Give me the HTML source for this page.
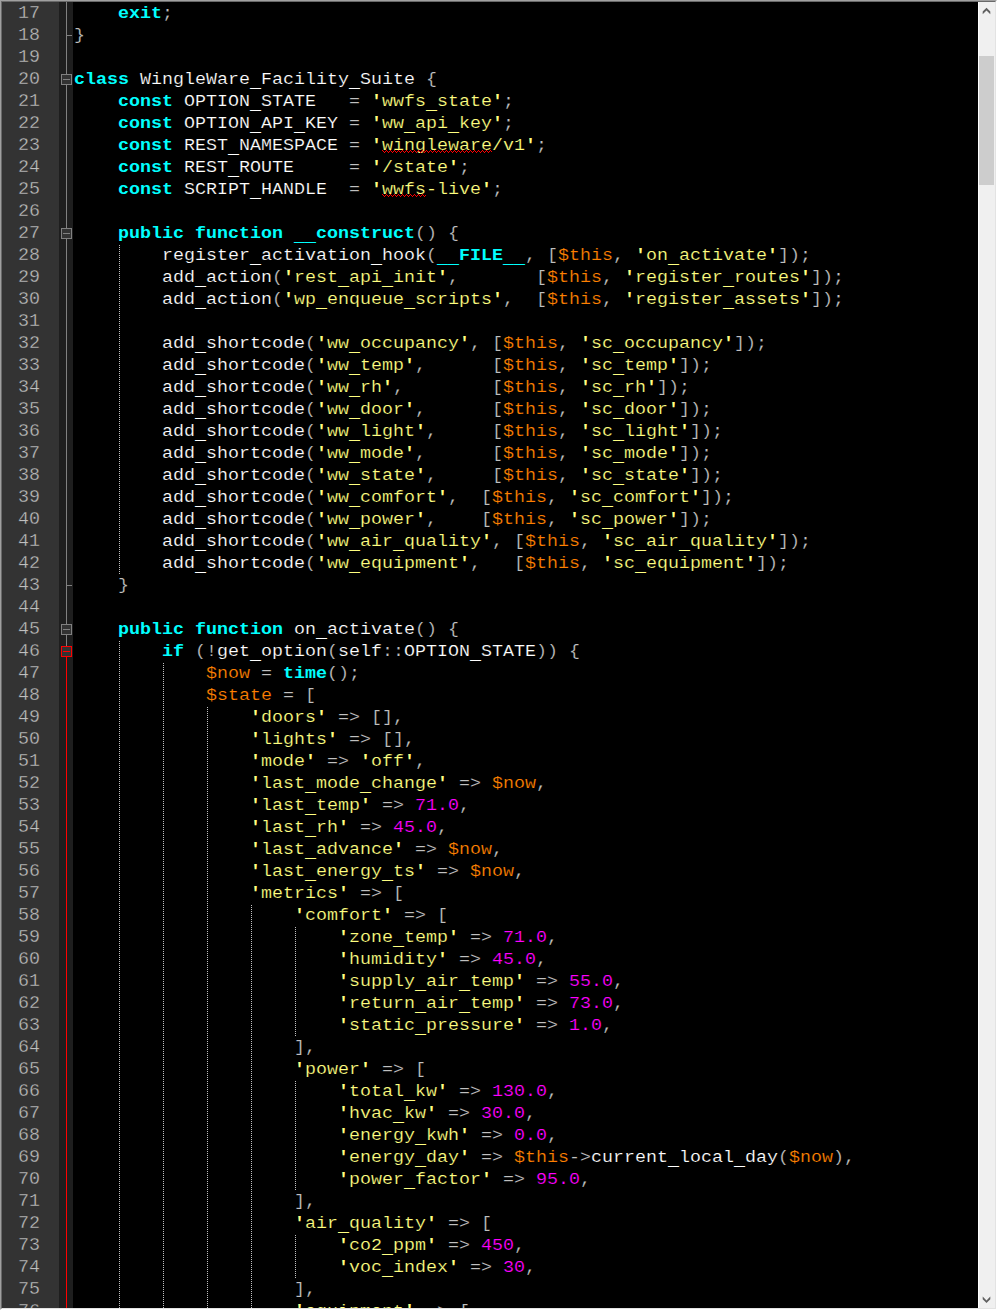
<!DOCTYPE html>
<html lang="en">
<head>
<meta charset="utf-8">
<title>WingleWare Facility Suite - editor</title>
<style>
html,body{margin:0;padding:0;background:#000;}
body{width:997px;height:1310px;overflow:hidden;position:relative;font-family:"Liberation Mono","DejaVu Sans Mono",monospace;font-size:18.333px;line-height:22px;color:#fff;}
#frame{position:absolute;left:0;top:0;width:997px;height:1310px;box-sizing:border-box;border-style:solid;border-width:1px;border-color:#a0a0a0 #fff #fff #a0a0a0;z-index:10;pointer-events:none;}
#frame:after{content:"";position:absolute;left:0;top:0;right:0;bottom:0;border-style:solid;border-width:1px;border-color:#696969 #e3e3e3 #e3e3e3 #696969;}
#num{position:absolute;left:2px;top:2px;width:57px;height:1306px;background:#333;color:#c0c0c0;overflow:hidden;}
#num div{height:22px;width:38px;text-align:right;white-space:pre;transform-origin:0 15px;transform:translateY(1px) scaleY(.96);-webkit-text-stroke:0.35px #333;}
#fold{position:absolute;left:59px;top:2px;width:14px;height:1306px;background:#1e1e1e;}
.fl{position:absolute;left:66px;width:1px;background:#808080;}
.fl.r,.tk.r{background:#ff0000;}
.tk{position:absolute;left:66px;width:6px;height:1px;background:#808080;}
.bx{position:absolute;left:61px;width:9px;height:9px;border:1px solid #808080;background:#333;}
.bx u{position:absolute;left:1px;top:4px;width:7px;height:1px;background:#808080;}
.bx.r{border-color:#ff0000;}
.bx.r u{background:#ff0000;}
#code{position:absolute;left:74px;top:2px;width:904px;height:1306px;overflow:hidden;}
.l{height:22px;white-space:pre;transform-origin:0 15px;transform:translateY(1px) scaleY(.86);-webkit-text-stroke:0.2px #000;}
b{color:#00ffff;font-weight:bold;-webkit-text-stroke:0;}
.u{position:relative;top:3.5px;-webkit-text-stroke:0;}
.s{color:#ffff80;}
.q{font-weight:bold;-webkit-text-stroke:0;}
.v{color:#ff8000;}
.n{color:#ff00ff;}
.o{color:#c0c0c0;}
.g{position:absolute;width:1px;background-image:linear-gradient(to bottom,#000 0,#000 1px,#c0c0c0 1px,#c0c0c0 2px);background-size:1px 2px;}
.sq{position:absolute;overflow:visible;}
#sb{position:absolute;left:978px;top:2px;width:17px;height:1306px;background:#f0f0f0;border-left:1px solid #fff;box-sizing:border-box;}
#thumb{position:absolute;left:0;top:54px;width:15px;height:129px;background:#cdcdcd;}
.ar{position:absolute;left:0;width:16px;height:17px;}
</style>
</head>
<body>
<svg width="0" height="0" style="position:absolute"><defs><pattern id="zz" width="4" height="3" patternUnits="userSpaceOnUse"><rect x="0" y="0" width="1" height="1" fill="#ff0000"/><rect x="1" y="1" width="1" height="1" fill="#ff0000"/><rect x="2" y="2" width="1" height="1" fill="#ff0000"/><rect x="3" y="1" width="1" height="1" fill="#ff0000"/></pattern></defs></svg>
<div id="num">
<div>17</div>
<div>18</div>
<div>19</div>
<div>20</div>
<div>21</div>
<div>22</div>
<div>23</div>
<div>24</div>
<div>25</div>
<div>26</div>
<div>27</div>
<div>28</div>
<div>29</div>
<div>30</div>
<div>31</div>
<div>32</div>
<div>33</div>
<div>34</div>
<div>35</div>
<div>36</div>
<div>37</div>
<div>38</div>
<div>39</div>
<div>40</div>
<div>41</div>
<div>42</div>
<div>43</div>
<div>44</div>
<div>45</div>
<div>46</div>
<div>47</div>
<div>48</div>
<div>49</div>
<div>50</div>
<div>51</div>
<div>52</div>
<div>53</div>
<div>54</div>
<div>55</div>
<div>56</div>
<div>57</div>
<div>58</div>
<div>59</div>
<div>60</div>
<div>61</div>
<div>62</div>
<div>63</div>
<div>64</div>
<div>65</div>
<div>66</div>
<div>67</div>
<div>68</div>
<div>69</div>
<div>70</div>
<div>71</div>
<div>72</div>
<div>73</div>
<div>74</div>
<div>75</div>
<div>76</div>
</div>
<div id="fold"></div>
<i class="fl" style="top:2px;height:644px"></i>
<i class="fl r" style="top:657px;height:651px"></i>
<i class="tk" style="top:35px"></i>
<i class="tk" style="top:585px"></i>
<i class="bx" style="top:74px"><u></u></i>
<i class="bx" style="top:228px"><u></u></i>
<i class="bx" style="top:624px"><u></u></i>
<i class="bx r" style="top:646px"><u></u></i>
<div id="code">
<div class="l">    <b>exit</b><span class="o">;</span></div>
<div class="l"><span class="o">}</span></div>
<div class="l"></div>
<div class="l"><b>class</b> WingleWare<span class="u">_</span>Facility<span class="u">_</span>Suite <span class="o">{</span></div>
<div class="l">    <b>const</b> OPTION<span class="u">_</span>STATE   <span class="o">=</span> <span class="s"><span class="q">'</span>wwfs<span class="u">_</span>state<span class="q">'</span></span><span class="o">;</span></div>
<div class="l">    <b>const</b> OPTION<span class="u">_</span>API<span class="u">_</span>KEY <span class="o">=</span> <span class="s"><span class="q">'</span>ww<span class="u">_</span>api<span class="u">_</span>key<span class="q">'</span></span><span class="o">;</span></div>
<div class="l">    <b>const</b> REST<span class="u">_</span>NAMESPACE <span class="o">=</span> <span class="s"><span class="q">'</span>wingleware/v1<span class="q">'</span></span><span class="o">;</span></div>
<div class="l">    <b>const</b> REST<span class="u">_</span>ROUTE     <span class="o">=</span> <span class="s"><span class="q">'</span>/state<span class="q">'</span></span><span class="o">;</span></div>
<div class="l">    <b>const</b> SCRIPT<span class="u">_</span>HANDLE  <span class="o">=</span> <span class="s"><span class="q">'</span>wwfs-live<span class="q">'</span></span><span class="o">;</span></div>
<div class="l"></div>
<div class="l">    <b>public</b> <b>function</b> <b><span class="u">_</span><span class="u">_</span>construct</b><span class="o">(</span><span class="o">)</span> <span class="o">{</span></div>
<div class="l">        register<span class="u">_</span>activation<span class="u">_</span>hook<span class="o">(</span><b><span class="u">_</span><span class="u">_</span>FILE<span class="u">_</span><span class="u">_</span></b><span class="o">,</span> <span class="o">[</span><span class="v">$this</span><span class="o">,</span> <span class="s"><span class="q">'</span>on<span class="u">_</span>activate<span class="q">'</span></span><span class="o">]</span><span class="o">)</span><span class="o">;</span></div>
<div class="l">        add<span class="u">_</span>action<span class="o">(</span><span class="s"><span class="q">'</span>rest<span class="u">_</span>api<span class="u">_</span>init<span class="q">'</span></span><span class="o">,</span>       <span class="o">[</span><span class="v">$this</span><span class="o">,</span> <span class="s"><span class="q">'</span>register<span class="u">_</span>routes<span class="q">'</span></span><span class="o">]</span><span class="o">)</span><span class="o">;</span></div>
<div class="l">        add<span class="u">_</span>action<span class="o">(</span><span class="s"><span class="q">'</span>wp<span class="u">_</span>enqueue<span class="u">_</span>scripts<span class="q">'</span></span><span class="o">,</span>  <span class="o">[</span><span class="v">$this</span><span class="o">,</span> <span class="s"><span class="q">'</span>register<span class="u">_</span>assets<span class="q">'</span></span><span class="o">]</span><span class="o">)</span><span class="o">;</span></div>
<div class="l"></div>
<div class="l">        add<span class="u">_</span>shortcode<span class="o">(</span><span class="s"><span class="q">'</span>ww<span class="u">_</span>occupancy<span class="q">'</span></span><span class="o">,</span> <span class="o">[</span><span class="v">$this</span><span class="o">,</span> <span class="s"><span class="q">'</span>sc<span class="u">_</span>occupancy<span class="q">'</span></span><span class="o">]</span><span class="o">)</span><span class="o">;</span></div>
<div class="l">        add<span class="u">_</span>shortcode<span class="o">(</span><span class="s"><span class="q">'</span>ww<span class="u">_</span>temp<span class="q">'</span></span><span class="o">,</span>      <span class="o">[</span><span class="v">$this</span><span class="o">,</span> <span class="s"><span class="q">'</span>sc<span class="u">_</span>temp<span class="q">'</span></span><span class="o">]</span><span class="o">)</span><span class="o">;</span></div>
<div class="l">        add<span class="u">_</span>shortcode<span class="o">(</span><span class="s"><span class="q">'</span>ww<span class="u">_</span>rh<span class="q">'</span></span><span class="o">,</span>        <span class="o">[</span><span class="v">$this</span><span class="o">,</span> <span class="s"><span class="q">'</span>sc<span class="u">_</span>rh<span class="q">'</span></span><span class="o">]</span><span class="o">)</span><span class="o">;</span></div>
<div class="l">        add<span class="u">_</span>shortcode<span class="o">(</span><span class="s"><span class="q">'</span>ww<span class="u">_</span>door<span class="q">'</span></span><span class="o">,</span>      <span class="o">[</span><span class="v">$this</span><span class="o">,</span> <span class="s"><span class="q">'</span>sc<span class="u">_</span>door<span class="q">'</span></span><span class="o">]</span><span class="o">)</span><span class="o">;</span></div>
<div class="l">        add<span class="u">_</span>shortcode<span class="o">(</span><span class="s"><span class="q">'</span>ww<span class="u">_</span>light<span class="q">'</span></span><span class="o">,</span>     <span class="o">[</span><span class="v">$this</span><span class="o">,</span> <span class="s"><span class="q">'</span>sc<span class="u">_</span>light<span class="q">'</span></span><span class="o">]</span><span class="o">)</span><span class="o">;</span></div>
<div class="l">        add<span class="u">_</span>shortcode<span class="o">(</span><span class="s"><span class="q">'</span>ww<span class="u">_</span>mode<span class="q">'</span></span><span class="o">,</span>      <span class="o">[</span><span class="v">$this</span><span class="o">,</span> <span class="s"><span class="q">'</span>sc<span class="u">_</span>mode<span class="q">'</span></span><span class="o">]</span><span class="o">)</span><span class="o">;</span></div>
<div class="l">        add<span class="u">_</span>shortcode<span class="o">(</span><span class="s"><span class="q">'</span>ww<span class="u">_</span>state<span class="q">'</span></span><span class="o">,</span>     <span class="o">[</span><span class="v">$this</span><span class="o">,</span> <span class="s"><span class="q">'</span>sc<span class="u">_</span>state<span class="q">'</span></span><span class="o">]</span><span class="o">)</span><span class="o">;</span></div>
<div class="l">        add<span class="u">_</span>shortcode<span class="o">(</span><span class="s"><span class="q">'</span>ww<span class="u">_</span>comfort<span class="q">'</span></span><span class="o">,</span>  <span class="o">[</span><span class="v">$this</span><span class="o">,</span> <span class="s"><span class="q">'</span>sc<span class="u">_</span>comfort<span class="q">'</span></span><span class="o">]</span><span class="o">)</span><span class="o">;</span></div>
<div class="l">        add<span class="u">_</span>shortcode<span class="o">(</span><span class="s"><span class="q">'</span>ww<span class="u">_</span>power<span class="q">'</span></span><span class="o">,</span>    <span class="o">[</span><span class="v">$this</span><span class="o">,</span> <span class="s"><span class="q">'</span>sc<span class="u">_</span>power<span class="q">'</span></span><span class="o">]</span><span class="o">)</span><span class="o">;</span></div>
<div class="l">        add<span class="u">_</span>shortcode<span class="o">(</span><span class="s"><span class="q">'</span>ww<span class="u">_</span>air<span class="u">_</span>quality<span class="q">'</span></span><span class="o">,</span> <span class="o">[</span><span class="v">$this</span><span class="o">,</span> <span class="s"><span class="q">'</span>sc<span class="u">_</span>air<span class="u">_</span>quality<span class="q">'</span></span><span class="o">]</span><span class="o">)</span><span class="o">;</span></div>
<div class="l">        add<span class="u">_</span>shortcode<span class="o">(</span><span class="s"><span class="q">'</span>ww<span class="u">_</span>equipment<span class="q">'</span></span><span class="o">,</span>   <span class="o">[</span><span class="v">$this</span><span class="o">,</span> <span class="s"><span class="q">'</span>sc<span class="u">_</span>equipment<span class="q">'</span></span><span class="o">]</span><span class="o">)</span><span class="o">;</span></div>
<div class="l">    <span class="o">}</span></div>
<div class="l"></div>
<div class="l">    <b>public</b> <b>function</b> on<span class="u">_</span>activate<span class="o">(</span><span class="o">)</span> <span class="o">{</span></div>
<div class="l">        <b>if</b> <span class="o">(</span><span class="o">!</span>get<span class="u">_</span>option<span class="o">(</span>self<span class="o">:</span><span class="o">:</span>OPTION<span class="u">_</span>STATE<span class="o">)</span><span class="o">)</span> <span class="o">{</span></div>
<div class="l">            <span class="v">$now</span> <span class="o">=</span> <b>time</b><span class="o">(</span><span class="o">)</span><span class="o">;</span></div>
<div class="l">            <span class="v">$state</span> <span class="o">=</span> <span class="o">[</span></div>
<div class="l">                <span class="s"><span class="q">'</span>doors<span class="q">'</span></span> <span class="o">=</span><span class="o">&gt;</span> <span class="o">[</span><span class="o">]</span><span class="o">,</span></div>
<div class="l">                <span class="s"><span class="q">'</span>lights<span class="q">'</span></span> <span class="o">=</span><span class="o">&gt;</span> <span class="o">[</span><span class="o">]</span><span class="o">,</span></div>
<div class="l">                <span class="s"><span class="q">'</span>mode<span class="q">'</span></span> <span class="o">=</span><span class="o">&gt;</span> <span class="s"><span class="q">'</span>off<span class="q">'</span></span><span class="o">,</span></div>
<div class="l">                <span class="s"><span class="q">'</span>last<span class="u">_</span>mode<span class="u">_</span>change<span class="q">'</span></span> <span class="o">=</span><span class="o">&gt;</span> <span class="v">$now</span><span class="o">,</span></div>
<div class="l">                <span class="s"><span class="q">'</span>last<span class="u">_</span>temp<span class="q">'</span></span> <span class="o">=</span><span class="o">&gt;</span> <span class="n">71.0</span><span class="o">,</span></div>
<div class="l">                <span class="s"><span class="q">'</span>last<span class="u">_</span>rh<span class="q">'</span></span> <span class="o">=</span><span class="o">&gt;</span> <span class="n">45.0</span><span class="o">,</span></div>
<div class="l">                <span class="s"><span class="q">'</span>last<span class="u">_</span>advance<span class="q">'</span></span> <span class="o">=</span><span class="o">&gt;</span> <span class="v">$now</span><span class="o">,</span></div>
<div class="l">                <span class="s"><span class="q">'</span>last<span class="u">_</span>energy<span class="u">_</span>ts<span class="q">'</span></span> <span class="o">=</span><span class="o">&gt;</span> <span class="v">$now</span><span class="o">,</span></div>
<div class="l">                <span class="s"><span class="q">'</span>metrics<span class="q">'</span></span> <span class="o">=</span><span class="o">&gt;</span> <span class="o">[</span></div>
<div class="l">                    <span class="s"><span class="q">'</span>comfort<span class="q">'</span></span> <span class="o">=</span><span class="o">&gt;</span> <span class="o">[</span></div>
<div class="l">                        <span class="s"><span class="q">'</span>zone<span class="u">_</span>temp<span class="q">'</span></span> <span class="o">=</span><span class="o">&gt;</span> <span class="n">71.0</span><span class="o">,</span></div>
<div class="l">                        <span class="s"><span class="q">'</span>humidity<span class="q">'</span></span> <span class="o">=</span><span class="o">&gt;</span> <span class="n">45.0</span><span class="o">,</span></div>
<div class="l">                        <span class="s"><span class="q">'</span>supply<span class="u">_</span>air<span class="u">_</span>temp<span class="q">'</span></span> <span class="o">=</span><span class="o">&gt;</span> <span class="n">55.0</span><span class="o">,</span></div>
<div class="l">                        <span class="s"><span class="q">'</span>return<span class="u">_</span>air<span class="u">_</span>temp<span class="q">'</span></span> <span class="o">=</span><span class="o">&gt;</span> <span class="n">73.0</span><span class="o">,</span></div>
<div class="l">                        <span class="s"><span class="q">'</span>static<span class="u">_</span>pressure<span class="q">'</span></span> <span class="o">=</span><span class="o">&gt;</span> <span class="n">1.0</span><span class="o">,</span></div>
<div class="l">                    <span class="o">]</span><span class="o">,</span></div>
<div class="l">                    <span class="s"><span class="q">'</span>power<span class="q">'</span></span> <span class="o">=</span><span class="o">&gt;</span> <span class="o">[</span></div>
<div class="l">                        <span class="s"><span class="q">'</span>total<span class="u">_</span>kw<span class="q">'</span></span> <span class="o">=</span><span class="o">&gt;</span> <span class="n">130.0</span><span class="o">,</span></div>
<div class="l">                        <span class="s"><span class="q">'</span>hvac<span class="u">_</span>kw<span class="q">'</span></span> <span class="o">=</span><span class="o">&gt;</span> <span class="n">30.0</span><span class="o">,</span></div>
<div class="l">                        <span class="s"><span class="q">'</span>energy<span class="u">_</span>kwh<span class="q">'</span></span> <span class="o">=</span><span class="o">&gt;</span> <span class="n">0.0</span><span class="o">,</span></div>
<div class="l">                        <span class="s"><span class="q">'</span>energy<span class="u">_</span>day<span class="q">'</span></span> <span class="o">=</span><span class="o">&gt;</span> <span class="v">$this</span><span class="o">-</span><span class="o">&gt;</span>current<span class="u">_</span>local<span class="u">_</span>day<span class="o">(</span><span class="v">$now</span><span class="o">)</span><span class="o">,</span></div>
<div class="l">                        <span class="s"><span class="q">'</span>power<span class="u">_</span>factor<span class="q">'</span></span> <span class="o">=</span><span class="o">&gt;</span> <span class="n">95.0</span><span class="o">,</span></div>
<div class="l">                    <span class="o">]</span><span class="o">,</span></div>
<div class="l">                    <span class="s"><span class="q">'</span>air<span class="u">_</span>quality<span class="q">'</span></span> <span class="o">=</span><span class="o">&gt;</span> <span class="o">[</span></div>
<div class="l">                        <span class="s"><span class="q">'</span>co2<span class="u">_</span>ppm<span class="q">'</span></span> <span class="o">=</span><span class="o">&gt;</span> <span class="n">450</span><span class="o">,</span></div>
<div class="l">                        <span class="s"><span class="q">'</span>voc<span class="u">_</span>index<span class="q">'</span></span> <span class="o">=</span><span class="o">&gt;</span> <span class="n">30</span><span class="o">,</span></div>
<div class="l">                    <span class="o">]</span><span class="o">,</span></div>
<div class="l">                    <span class="s"><span class="q">'</span>equipment<span class="q">'</span></span> <span class="o">=</span><span class="o">&gt;</span> <span class="o">[</span></div>
</div>
<i class="g" style="left:119px;top:244px;height:330px"></i>
<i class="g" style="left:119px;top:640px;height:682px"></i>
<i class="g" style="left:163px;top:662px;height:660px"></i>
<i class="g" style="left:207px;top:706px;height:616px"></i>
<i class="g" style="left:251px;top:904px;height:418px"></i>
<i class="g" style="left:295px;top:926px;height:110px"></i>
<i class="g" style="left:295px;top:1080px;height:110px"></i>
<i class="g" style="left:295px;top:1234px;height:44px"></i>
<svg class="sq" style="left:382px;top:150px" width="110" height="3" shape-rendering="crispEdges"><rect width="110" height="3" fill="url(#zz)"/></svg>
<svg class="sq" style="left:382px;top:194px" width="44" height="3" shape-rendering="crispEdges"><rect width="44" height="3" fill="url(#zz)"/></svg>
<div id="sb">
<svg class="ar" style="top:0" viewBox="0 0 16 17"><polygon points="3.7,9.5 7.5,5.7 11.3,9.5 11.3,12.2 7.5,8.4 3.7,12.2" fill="#606060"/></svg>
<div id="thumb"></div>
<svg class="ar" style="bottom:0" viewBox="0 0 16 17"><polygon points="3.7,5.6 7.5,9.4 11.3,5.6 11.3,8.3 7.5,12.1 3.7,8.3" fill="#606060"/></svg>
</div>
<div id="frame"></div>
</body>
</html>
